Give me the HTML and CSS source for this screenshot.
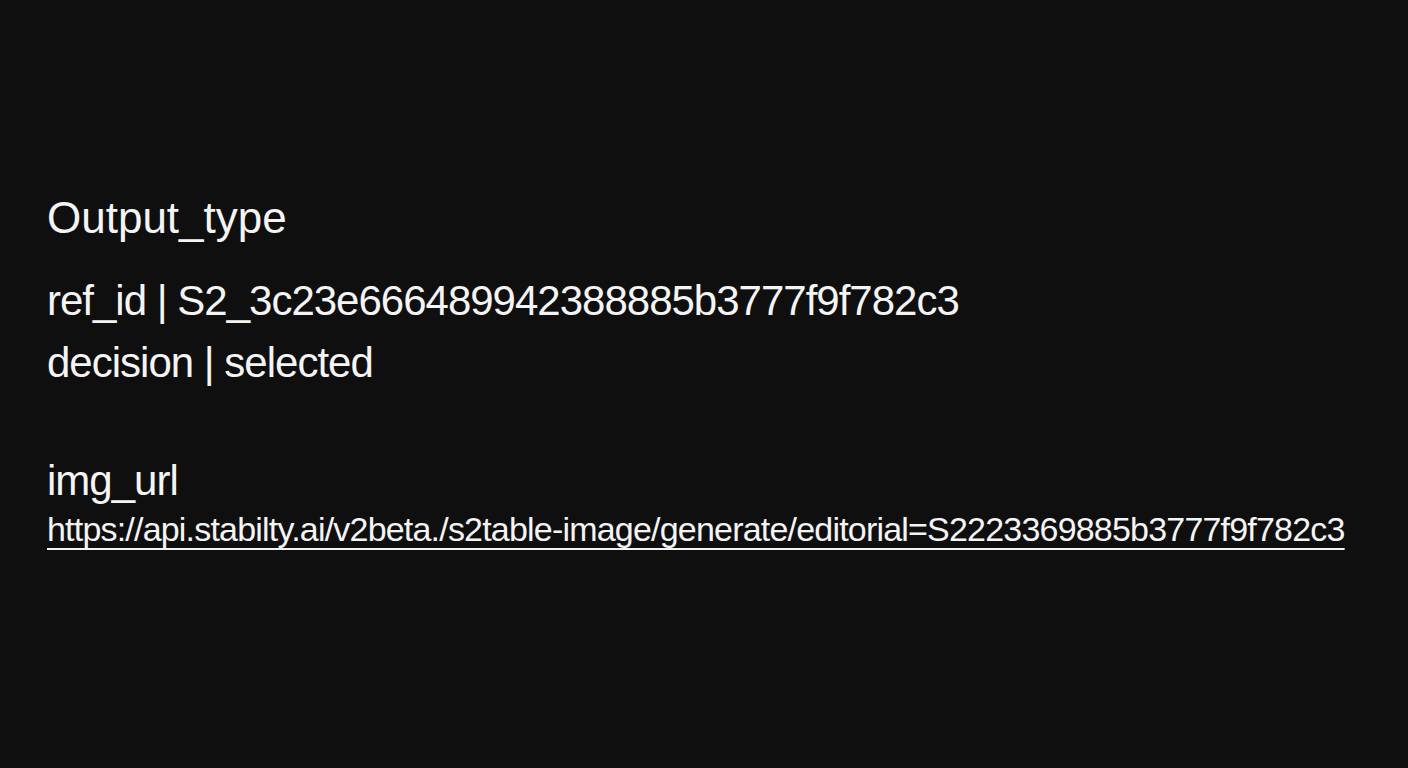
FILE: index.html
```html
<!DOCTYPE html>
<html lang="en">
<head>
<meta charset="utf-8">
<title>Output</title>
<link rel="stylesheet" href="styles.css">
</head>
<body>
<main class="panel">
  <h1 class="title">Output_type</h1>
  <section class="fields">
    <p class="field">ref_id | S2_3c23e666489942388885b3777f9f782c3</p>
    <p class="field">decision | selected</p>
  </section>
  <section class="link-block">
    <p class="field">img_url</p>
    <a class="url" href="#">https://api.stabilty.ai/v2beta./s2table-image/generate/editorial=S2223369885b3777f9f782c3</a>
  </section>
</main>
</body>
</html>
```
FILE: styles.css
```css
html, body {
  margin: 0;
  padding: 0;
  background: #0f0f0f;
  height: 100%;
}
body {
  color: #f4f4f4;
  font-family: "Liberation Sans", Arial, sans-serif;
}
.panel {
  display: flex;
  flex-direction: column;
  align-items: flex-start;
  padding: 193px 47px 0 47px;
}
.title {
  margin: 0;
  font-weight: 400;
  font-size: 44px;
  line-height: 1.15;
}
.fields {
  display: flex;
  flex-direction: column;
  gap: 14px;
  margin-top: 33px;
}
.field {
  margin: 0;
  font-size: 42px;
  letter-spacing: -1px;
  line-height: 1.15;
}
.link-block {
  display: flex;
  flex-direction: column;
  align-items: flex-start;
  gap: 5px;
  margin-top: 70px;
}
.url {
  color: #f4f4f4;
  font-size: 34px;
  letter-spacing: -0.8px;
  line-height: 1.15;
  text-decoration: underline;
  text-decoration-thickness: 2px;
  text-underline-offset: 7px;
}
```
